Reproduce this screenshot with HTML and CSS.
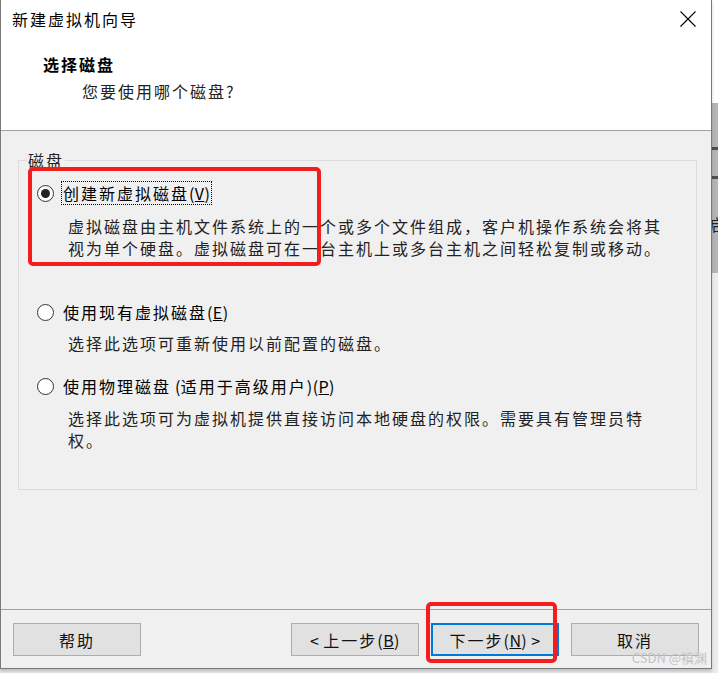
FILE: index.html
```html
<!DOCTYPE html>
<html lang="zh-CN">
<head>
<meta charset="utf-8">
<title>新建虚拟机向导</title>
<link rel="stylesheet" href="styles.css">
</head>
<body>
<div class="screen">
  <div class="window">
    <div class="header">
      <div class="titlebar">
        <span class="title">新建虚拟机向导</span>
        <svg class="close" width="16" height="16" viewBox="0 0 16 16"><path d="M0.5 0.5 L15.5 15.5 M15.5 0.5 L0.5 15.5" stroke="#000" stroke-width="1.1" fill="none"/></svg>
      </div>
      <div class="heading">选择磁盘</div>
      <div class="subheading">您要使用哪个磁盘<span class="lat">?</span></div>
    </div>
    <div class="content">
      <fieldset class="group">
        <legend class="legend">磁盘</legend>
        <div class="row row-1">
          <span class="radio checked"></span>
          <span class="label focus">创建新虚拟磁盘<span class="lat">(<u>V</u>)</span></span>
        </div>
        <div class="desc desc-1">
          <div class="line">虚拟磁盘由主机文件系统上的一个或多个文件组成，客户机操作系统会将其</div>
          <div class="line">视为单个硬盘。虚拟磁盘可在一台主机上或多台主机之间轻松复制或移动。</div>
        </div>
        <div class="row row-2">
          <span class="radio"></span>
          <span class="label">使用现有虚拟磁盘<span class="lat">(<u>E</u>)</span></span>
        </div>
        <div class="desc desc-2">
          <div class="line">选择此选项可重新使用以前配置的磁盘。</div>
        </div>
        <div class="row row-3">
          <span class="radio"></span>
          <span class="label">使用物理磁盘<span class="lat"> (</span>适用于高级用户<span class="lat">)(<u>P</u>)</span></span>
        </div>
        <div class="desc desc-3">
          <div class="line">选择此选项可为虚拟机提供直接访问本地硬盘的权限。需要具有管理员特</div>
          <div class="line">权。</div>
        </div>
      </fieldset>
    </div>
    <div class="footer">
      <button class="btn">帮助</button>
      <span class="spacer"></span>
      <button class="btn"><span class="lat">&lt; </span>上一步<span class="lat">(<u>B</u>)</span></button>
      <button class="btn btn-default">下一步<span class="lat">(<u>N</u>) &gt;</span></button>
      <button class="btn">取消</button>
    </div>
    <div class="mark mark-1"></div>
    <div class="mark mark-2"></div>
    <div class="watermark">CSDN @禛渊</div>
  </div>
  <div class="desk">
    <div class="desk-top"></div>
    <div class="desk-mid">
      <div class="desk-bar bar-1"></div>
      <div class="desk-bar bar-2"></div>
      <div class="desk-glyph">启</div>
    </div>
    <div class="desk-bottom"></div>
  </div>
</div>
</body>
</html>
```

FILE: styles.css
```css
* { box-sizing: border-box; }

html, body {
  margin: 0;
  padding: 0;
}

body {
  width: 718px;
  height: 673px;
  overflow: hidden;
  background: #e6e6e6;
  font-family: "Noto Sans CJK SC", "Liberation Sans", sans-serif;
  font-size: 16px;
  line-height: 22px;
  letter-spacing: 2px;
  color: #111;
}

.lat {
  letter-spacing: 0.4px;
}

.screen {
  display: flex;
  width: 718px;
  height: 673px;
}

.window {
  position: relative;
  width: 712px;
  height: 669px;
  flex: none;
  display: flex;
  flex-direction: column;
  background: #f0f0f0;
  border-left: 1px solid #7a7a7a;
  border-right: 1px solid #7a7a7a;
  border-bottom: 1px solid #7a7a7a;
  box-shadow: 0 2px 3px rgba(0,0,0,0.18);
}

/* header */
.header {
  height: 131px;
  flex: none;
  background: #fff;
  border-bottom: 1px solid #a0a0a0;
}

.titlebar {
  height: 38px;
  display: flex;
  align-items: center;
  justify-content: space-between;
  padding: 0 15px 0 11px;
}

.title {
  color: #000;
}

.close {
  display: block;
  margin-top: -1px;
}

.heading {
  margin: 15px 0 0 42px;
  font-weight: bold;
  color: #000;
}

.subheading {
  margin: 5px 0 0 81px;
  color: #222;
}

/* content */
.content {
  flex: 1;
  padding: 18px 14px 0 17px;
}

.group {
  margin: 0;
  height: 341px;
  padding: 0 0 0 18px;
  border: 1px solid #dcdcdc;
  min-width: 0;
}

.legend {
  margin-left: -10px;
  padding: 0 1px;
  line-height: 22px;
  color: #222;
}

.row {
  display: flex;
  align-items: center;
  height: 22px;
}

.row-1 { margin-top: 11px; }
.row-2 { margin-top: 42px; }
.row-3 { margin-top: 21px; }

.radio {
  width: 17px;
  height: 17px;
  flex: none;
  border: 1.4px solid #333;
  border-radius: 50%;
  background: #fff;
  display: flex;
  align-items: center;
  justify-content: center;
}

.radio.checked::after {
  content: "";
  width: 9px;
  height: 9px;
  border-radius: 50%;
  background: #222;
}

.label {
  margin-left: 8px;
  padding: 0 1px;
  color: #000;
  white-space: nowrap;
}

.label.focus {
  outline: 1px dotted #000;
  outline-offset: 0;
}

.desc {
  margin: 0 0 0 31px;
  white-space: nowrap;
  color: #222;
}

.line {
  height: 22px;
}

.desc-1 { margin-top: 11px; }
.desc-2 { margin-top: 9px; }
.desc-3 { margin-top: 10px; }

/* footer */
.footer {
  flex: none;
  height: 59px;
  border-top: 1px solid #a0a0a0;
  display: flex;
  align-items: flex-start;
  gap: 12px;
  padding: 13px 12px 12px 12px;
}

.spacer { flex: 1; }

.btn {
  width: 128px;
  height: 33px;
  padding: 0;
  background: #e1e1e1;
  border: 1px solid #adadad;
  font: inherit;
  letter-spacing: inherit;
  color: #111;
  line-height: 22px;
}

.btn-default {
  border: 2px solid #0078d7;
}

/* annotation marks */
.mark {
  position: absolute;
  border: 4px solid #f21e1e;
  border-radius: 5px;
}

.mark-1 {
  left: 27px;
  top: 167px;
  width: 293px;
  height: 99px;
}

.mark-2 {
  left: 425px;
  top: 602px;
  width: 131px;
  height: 61px;
}

.watermark {
  position: absolute;
  right: 4px;
  bottom: 3px;
  font-size: 13px;
  line-height: 15px;
  letter-spacing: 0;
  color: #c4c4c4;
}

/* desktop strip on the right */
.desk {
  flex: 1;
  display: flex;
  flex-direction: column;
  height: 673px;
  overflow: hidden;
}

.desk-top {
  height: 103px;
  background: #fff;
}

.desk-mid {
  height: 170px;
  background: #b4b4b4;
  display: flex;
  flex-direction: column;
  overflow: hidden;
}

.desk-bar {
  height: 3px;
  flex: none;
  background: #4c5056;
}

.bar-1 { margin-top: 44px; }
.bar-2 { margin-top: 26px; }

.desk-glyph {
  margin-top: 36px;
  margin-left: -3px;
  font-size: 16px;
  line-height: 18px;
  letter-spacing: 0;
  color: #222;
}

.desk-bottom {
  flex: 1;
  background: #ececec;
}
```
